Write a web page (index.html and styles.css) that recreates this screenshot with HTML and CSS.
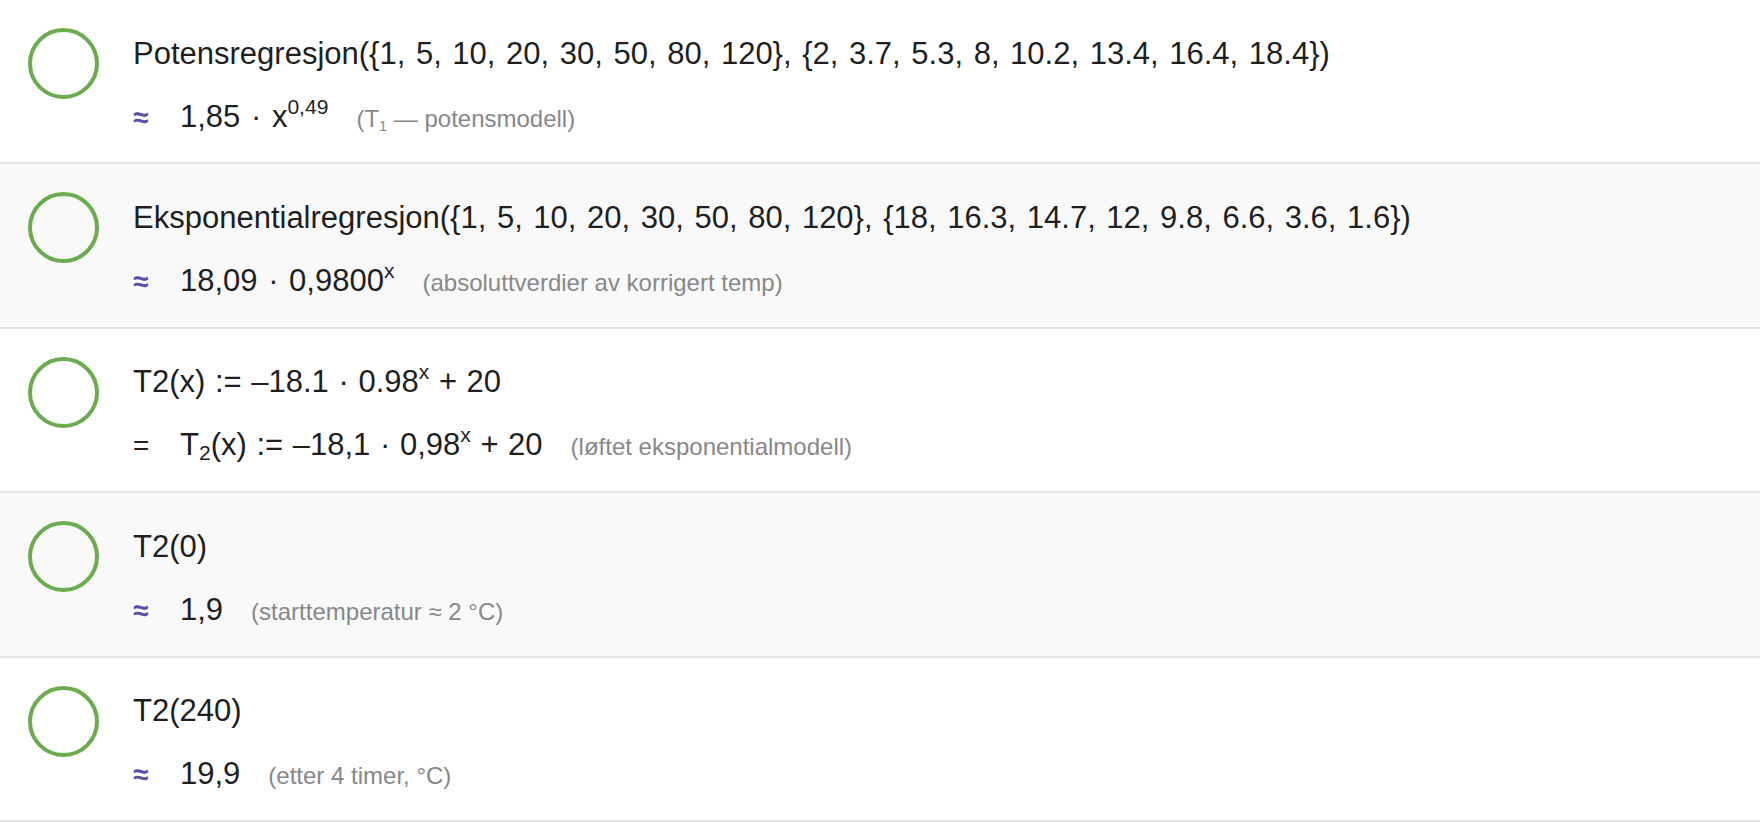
FILE: index.html
```html
<!DOCTYPE html>
<html lang="no">
<head>
<meta charset="utf-8">
<title>Regresjon</title>
<link rel="stylesheet" href="styles.css">
</head>
<body>
<div class="list">
  <div class="row">
    <div class="marker"></div>
    <div class="body">
      <div class="input">Potensregresjon({1, 5, 10, 20, 30, 50, 80, 120}, {2, 3.7, 5.3, 8, 10.2, 13.4, 16.4, 18.4})</div>
      <div class="output"><span class="sym approx">≈</span><span class="val">1,85 · x<sup>0,49</sup></span><span class="note">(T<sub>1</sub> — potensmodell)</span></div>
    </div>
  </div>
  <div class="row alt">
    <div class="marker"></div>
    <div class="body">
      <div class="input">Eksponentialregresjon({1, 5, 10, 20, 30, 50, 80, 120}, {18, 16.3, 14.7, 12, 9.8, 6.6, 3.6, 1.6})</div>
      <div class="output"><span class="sym approx">≈</span><span class="val">18,09 · 0,9800<sup>x</sup></span><span class="note">(absoluttverdier av korrigert temp)</span></div>
    </div>
  </div>
  <div class="row">
    <div class="marker"></div>
    <div class="body">
      <div class="input expr">T2(x) := –18.1 · 0.98<sup>x</sup> + 20</div>
      <div class="output"><span class="sym eq">=</span><span class="val expr">T<sub>2</sub>(x) := –18,1 · 0,98<sup>x</sup> + 20</span><span class="note">(løftet eksponentialmodell)</span></div>
    </div>
  </div>
  <div class="row alt">
    <div class="marker"></div>
    <div class="body">
      <div class="input">T2(0)</div>
      <div class="output"><span class="sym approx">≈</span><span class="val">1,9</span><span class="note">(starttemperatur ≈ 2 °C)</span></div>
    </div>
  </div>
  <div class="row">
    <div class="marker"></div>
    <div class="body">
      <div class="input">T2(240)</div>
      <div class="output"><span class="sym approx">≈</span><span class="val">19,9</span><span class="note">(etter 4 timer, °C)</span></div>
    </div>
  </div>
</div>
</body>
</html>
```

FILE: styles.css
```css
html, body {
  margin: 0;
  padding: 0;
  background: #ffffff;
}
body {
  font-family: "Liberation Sans", Arial, Helvetica, sans-serif;
  color: #1f1f1f;
}
.list {
  display: flex;
  flex-direction: column;
}
.row {
  display: flex;
  align-items: flex-start;
  gap: 34px;
  padding: 28px 28px 27.8px 28px;
  border-bottom: 2px solid #e3e3e3;
  background: #ffffff;
}
.row.alt {
  background: #f9f9f9;
}
.marker {
  flex: none;
  width: 71px;
  height: 71px;
  box-sizing: border-box;
  border: 4px solid #6aad4e;
  border-radius: 50%;
}
.body {
  display: flex;
  flex-direction: column;
  gap: 27px;
  margin-top: 7.6px;
  font-size: 31px;
  line-height: 36px;
}
.input, .output {
  white-space: nowrap;
  height: 36px;
}
.input, .val {
  word-spacing: 2px;
}
.expr {
  word-spacing: 1px;
}
.sym {
  display: inline-block;
  width: 47px;
  font-size: 28px;
  font-weight: bold;
  line-height: 0;
}
.sym.approx {
  color: #5a4cb2;
}
.sym.eq {
  color: #1f1f1f;
  font-weight: normal;
}
sup {
  font-size: 0.68em;
  line-height: 0;
  vertical-align: 0.6em;
}
sub {
  font-size: 0.68em;
  line-height: 0;
  vertical-align: -0.25em;
}
.note {
  margin-left: 28px;
  font-size: 24px;
  color: #888888;
  word-spacing: 0;
}
.note sub {
  font-size: 0.6em;
}
```
